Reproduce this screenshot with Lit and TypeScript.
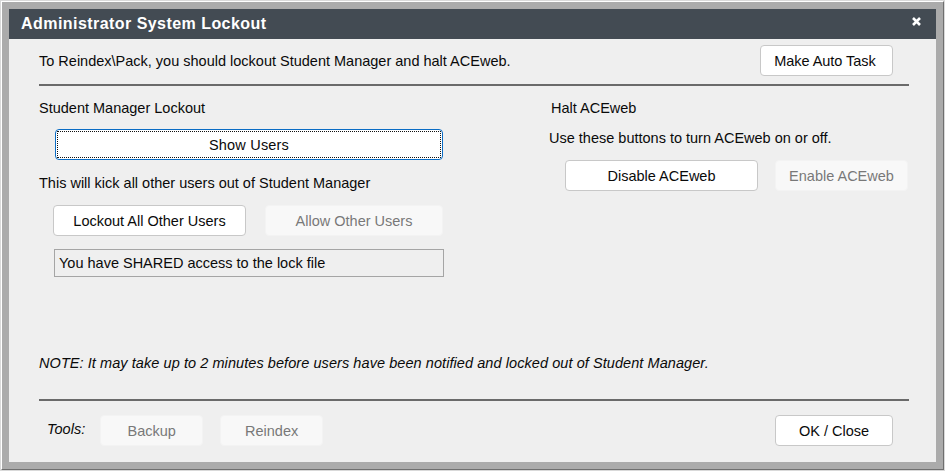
import { LitElement, html, css } from "lit";
import { customElement } from "lit/decorators.js";

@customElement("app-root")
export class AppRoot extends LitElement {
  static styles = css`
    :host { display: block; width: 945px; height: 471px; font-family: "Liberation Sans", Arial, sans-serif; font-size: 14.5px; color: #0a0a0a; }
    * { box-sizing: border-box; }
    .outer { width: 945px; height: 471px; border: 1px solid #d9d9d9; }
    .frame { width: 100%; height: 100%; background: #ababab; border: 1px solid #6f6f6f; border-top-color: #fff; border-left-color: #fff; padding: 7px; display: flex; }
    .dialog { flex: 1; background: #efefef; display: flex; flex-direction: column; min-width: 0; }
    .title { height: 30px; flex: none; background: #434b53; color: #fff; font-weight: 700; font-size: 16px; letter-spacing: 0.45px; display: flex; align-items: center; justify-content: space-between; padding: 0 15px 0 12px; }
    .close { width: 9px; height: 9px; display: block; margin-bottom: 6px; }
    .content { flex: 1; padding: 6px 27px 0 30px; display: flex; flex-direction: column; }
    .top { height: 39px; flex: none; display: flex; align-items: flex-start; justify-content: space-between; padding-right: 16px; }
    .top span { margin-top: 8px; }
    hr { margin: 0; border: 0; height: 2px; background: #6a6a6a; flex: none; }
    .cols { height: 313px; flex: none; display: flex; flex-direction: column; }
    .columns { display: flex; height: 269px; padding-top: 14px; }
    .left { width: 405px; flex: none; display: flex; flex-direction: column; }
    .right { margin-left: 105px; flex: 1; display: flex; flex-direction: column; }
    .note { font-style: italic; letter-spacing: 0.07px; }
    button { font: inherit; color: #0a0a0a; height: 31px; background: #fff; border: 1px solid #c8c8c8; border-radius: 4px; padding: 0; flex: none; }
    button:disabled { background: #f8f8f8; border-color: #f3f3f3; color: #787878; }
    .auto { width: 133px; padding-right: 3px; letter-spacing: -0.05px; }
    .show { width: 388px; margin: 13px 0 0 16px; border: 1px solid #0a6cc4; position: relative; letter-spacing: 0.2px; }
    .show::after { content: ""; position: absolute; inset: 1px; border: 1px dotted #111; }
    .row { display: flex; }
    .kick { margin-top: 15px; }
    .left .row { margin: 14px 0 0 14px; gap: 19px; }
    .lock { width: 193px; }
    .allow { width: 178px; }
    .status { margin: 13px 0 0 15px; width: 390px; height: 28px; border: 1px solid #a5a5a5; padding-left: 4px; display: flex; align-items: center; }
    .halt { margin-left: 2px; }
    .use { margin-top: 14px; }
    .right .row { margin: 14px 0 0 16px; gap: 17px; }
    .disable { width: 193px; }
    .enable { width: 133px; }
    .foot { flex: 1; display: flex; align-items: flex-start; padding: 14px 16px 0 8px; }
    .tools { font-style: italic; margin: 6px 15px 0 0; }
    .foot .sp { flex: 1; }
    .foot .t { width: 103px; margin-right: 17px; }
    .ok { width: 118px; }
  `;
  render() {
    return html`<div class="outer"><div class="frame"><div class="dialog">
      <div class="title"><span>Administrator System Lockout</span><svg class="close" viewBox="0 0 9 9"><path d="M1 1L8 8M8 1L1 8" stroke="#fff" stroke-width="2.6" fill="none" /></svg></div>
      <div class="content">
        <div class="top"><span>To Reindex\\Pack, you should lockout Student Manager and halt ACEweb.</span><button class="auto">Make Auto Task</button></div>
        <hr />
        <div class="cols">
          <div class="columns">
            <div class="left">
              <span>Student Manager Lockout</span>
              <button class="show">Show Users</button>
              <span class="kick">This will kick all other users out of Student Manager</span>
              <div class="row"><button class="lock">Lockout All Other Users</button><button class="allow" disabled>Allow Other Users</button></div>
              <div class="status">You have SHARED access to the lock file</div>
            </div>
            <div class="right">
              <span class="halt">Halt ACEweb</span>
              <span class="use">Use these buttons to turn ACEweb on or off.</span>
              <div class="row"><button class="disable">Disable ACEweb</button><button class="enable" disabled>Enable ACEweb</button></div>
            </div>
          </div>
          <span class="note">NOTE: It may take up to 2 minutes before users have been notified and locked out of Student Manager.</span>
        </div>
        <hr />
        <div class="foot"><span class="tools">Tools:</span><button class="t" disabled>Backup</button><button class="t" disabled>Reindex</button><span class="sp"></span><button class="ok">OK / Close</button></div>
      </div>
    </div></div></div>`;
  }
}
